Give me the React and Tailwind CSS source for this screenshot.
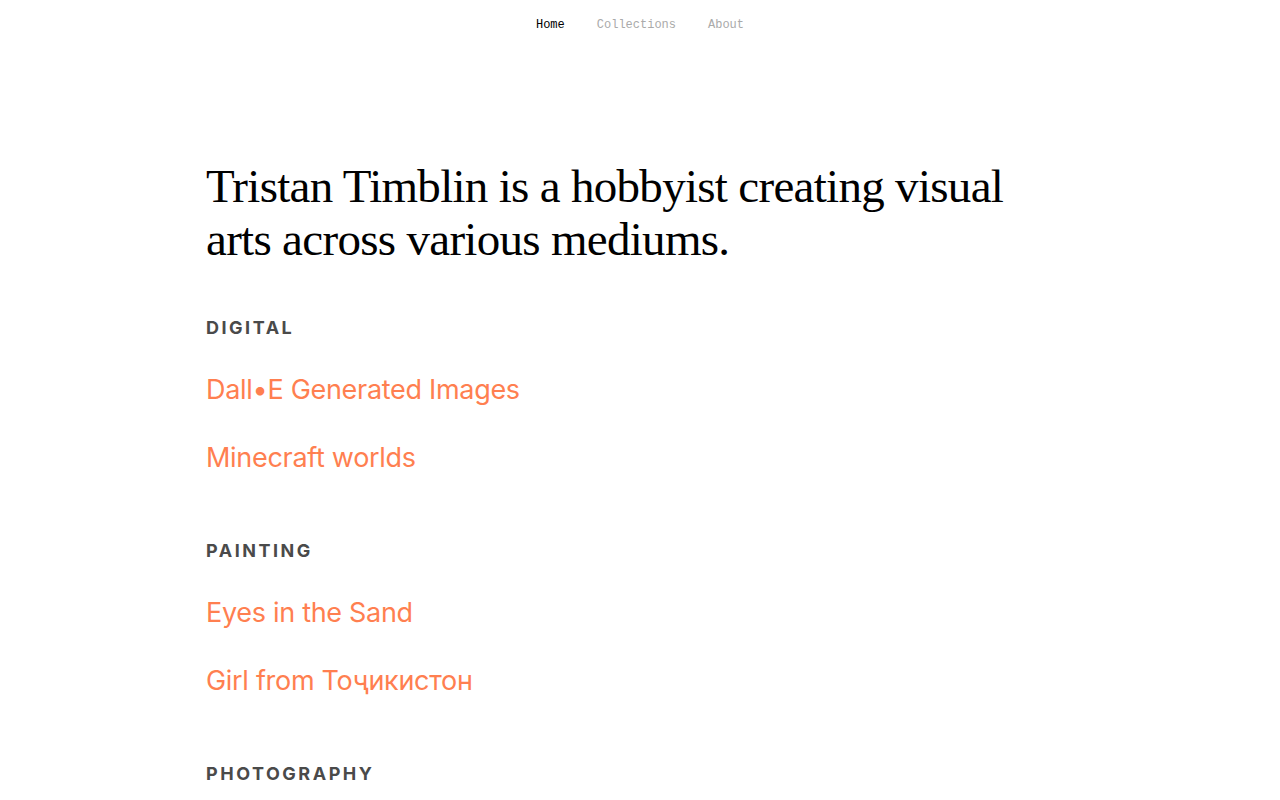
import React from "react";

const sections = [
  { title: "Digital", items: ["Dall•E Generated Images", "Minecraft worlds"] },
  { title: "Painting", items: ["Eyes in the Sand", "Girl from Тоҷикистон"] },
  { title: "Photography", items: [] },
];

export default function App() {
  return (
    <div className="min-h-screen bg-white">
      {/* Nav */}
      <nav className="flex justify-center gap-8 pt-[17px] text-[12px] leading-[16px] font-['Liberation_Mono',monospace]">
        <a className="text-black">Home</a>
        <a className="text-[#aaaaaa]">Collections</a>
        <a className="text-[#aaaaaa]">About</a>
      </nav>

      <main className="mx-auto w-[868px] pt-[127px]">
        <h1 className="text-[47px] leading-[53px] text-black font-['Liberation_Serif',serif] tracking-[-0.7px]">
          Tristan Timblin is a hobbyist creating visual
          <br />
          arts across various mediums.
        </h1>

        <div className="mt-[50px] flex flex-col gap-[63px]">
          {sections.map((s) => (
            <section key={s.title}>
              <h2 className="text-[18px] leading-[24px] font-bold uppercase tracking-[0.14em] text-[#4a4a4a] font-['Inter',sans-serif]">
                {s.title}
              </h2>
              {s.items.length > 0 && (
                <ul className="mt-[32px] flex flex-col gap-[32px]">
                  {s.items.map((item) => (
                    <li key={item}>
                      <a className="text-[27px] leading-[36px] tracking-[-0.3px] text-[#ff7f50] font-['Inter',sans-serif]">
                        {item}
                      </a>
                    </li>
                  ))}
                </ul>
              )}
            </section>
          ))}
        </div>
      </main>
    </div>
  );
}
